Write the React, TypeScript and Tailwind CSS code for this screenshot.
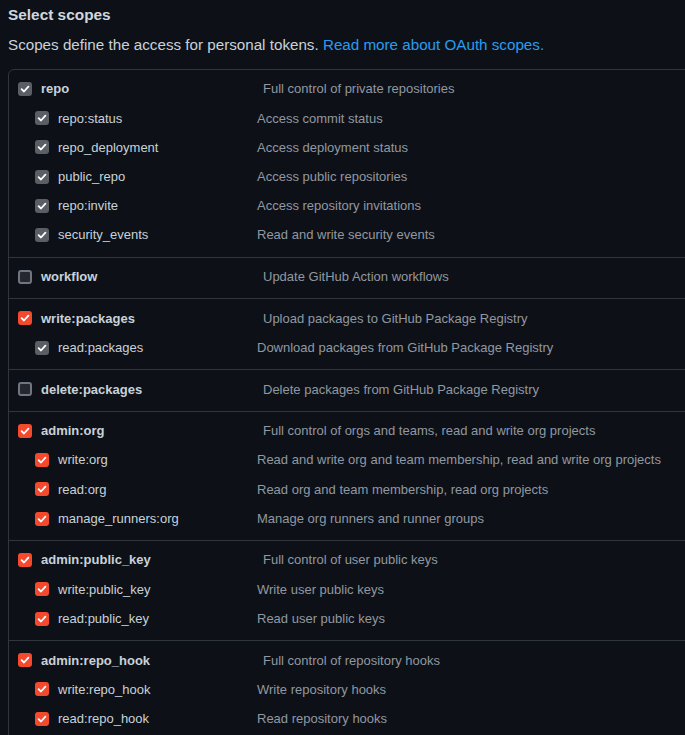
import React from "react";

type Scope = {
  name: string;
  desc: string;
  checked: boolean;
  red?: boolean;
  children?: { name: string; desc: string; red?: boolean }[];
};

const scopes: Scope[] = [
  {
    name: "repo",
    desc: "Full control of private repositories",
    checked: true,
    children: [
      { name: "repo:status", desc: "Access commit status" },
      { name: "repo_deployment", desc: "Access deployment status" },
      { name: "public_repo", desc: "Access public repositories" },
      { name: "repo:invite", desc: "Access repository invitations" },
      { name: "security_events", desc: "Read and write security events" },
    ],
  },
  { name: "workflow", desc: "Update GitHub Action workflows", checked: false },
  {
    name: "write:packages",
    desc: "Upload packages to GitHub Package Registry",
    checked: true,
    red: true,
    children: [{ name: "read:packages", desc: "Download packages from GitHub Package Registry" }],
  },
  { name: "delete:packages", desc: "Delete packages from GitHub Package Registry", checked: false },
  {
    name: "admin:org",
    desc: "Full control of orgs and teams, read and write org projects",
    checked: true,
    red: true,
    children: [
      { name: "write:org", desc: "Read and write org and team membership, read and write org projects", red: true },
      { name: "read:org", desc: "Read org and team membership, read org projects", red: true },
      { name: "manage_runners:org", desc: "Manage org runners and runner groups", red: true },
    ],
  },
  {
    name: "admin:public_key",
    desc: "Full control of user public keys",
    checked: true,
    red: true,
    children: [
      { name: "write:public_key", desc: "Write user public keys", red: true },
      { name: "read:public_key", desc: "Read user public keys", red: true },
    ],
  },
  {
    name: "admin:repo_hook",
    desc: "Full control of repository hooks",
    checked: true,
    red: true,
    children: [
      { name: "write:repo_hook", desc: "Write repository hooks", red: true },
      { name: "read:repo_hook", desc: "Read repository hooks", red: true },
    ],
  },
];

const Checkbox = ({ checked, red }: { checked: boolean; red?: boolean }) => {
  if (!checked) {
    return (
      <span className="w-[14px] h-[14px] shrink-0 rounded-[3px] border-2 border-[#6e7681] bg-[#24282e]" />
    );
  }
  return (
    <span
      className={`w-[14px] h-[14px] shrink-0 rounded-[3px] flex items-center justify-center ${
        red ? "bg-[#f5492d]" : "bg-[#5a5e65]"
      }`}
    >
      <svg width="10" height="10" viewBox="0 0 10 10" fill="none">
        <path d="M1.6 5.2 L4 7.5 L8.4 2.6" stroke="white" strokeWidth="1.8" strokeLinecap="round" strokeLinejoin="round" />
      </svg>
    </span>
  );
};

export default function App() {
  return (
    <div
      className="w-[685px] h-[735px] overflow-hidden bg-[#0d1117] text-[#c9d1d9] px-2"
      style={{ fontFamily: '"Liberation Sans", Arial, sans-serif' }}
    >
      <h2 className="text-[15.4px] font-bold leading-[20px] pt-[5px] text-[#d0d7de]">Select scopes</h2>
      <p className="text-[15.2px] leading-[20px] mt-[10px] text-[#c9d1d9]">
        Scopes define the access for personal tokens.{" "}
        <span className="text-[#2a9cf0]">Read more about OAuth scopes.</span>
      </p>

      <div className="mt-[14px] w-[760px] border border-[#30363d] rounded-md">
        {scopes.map((s, i) => (
          <div key={s.name} className={`pt-[4.5px] pb-[7px] ${i > 0 ? "border-t border-[#30363d]" : ""}`}>
            <div className="flex items-center h-[29.2px] pl-[9px] text-[13px]">
              <Checkbox checked={s.checked} red={s.red} />
              <span className="ml-[9px] w-[222px] font-bold text-[#c9d1d9]">{s.name}</span>
              <span className="text-[#9198a1]">{s.desc}</span>
            </div>
            {s.children?.map((c) => (
              <div key={c.name} className="flex items-center h-[29.2px] pl-[26px] text-[13px]">
                <Checkbox checked red={c.red} />
                <span className="ml-[9px] w-[199px] text-[#c9d1d9]">{c.name}</span>
                <span className="text-[#9198a1]">{c.desc}</span>
              </div>
            ))}
          </div>
        ))}
      </div>
    </div>
  );
}
